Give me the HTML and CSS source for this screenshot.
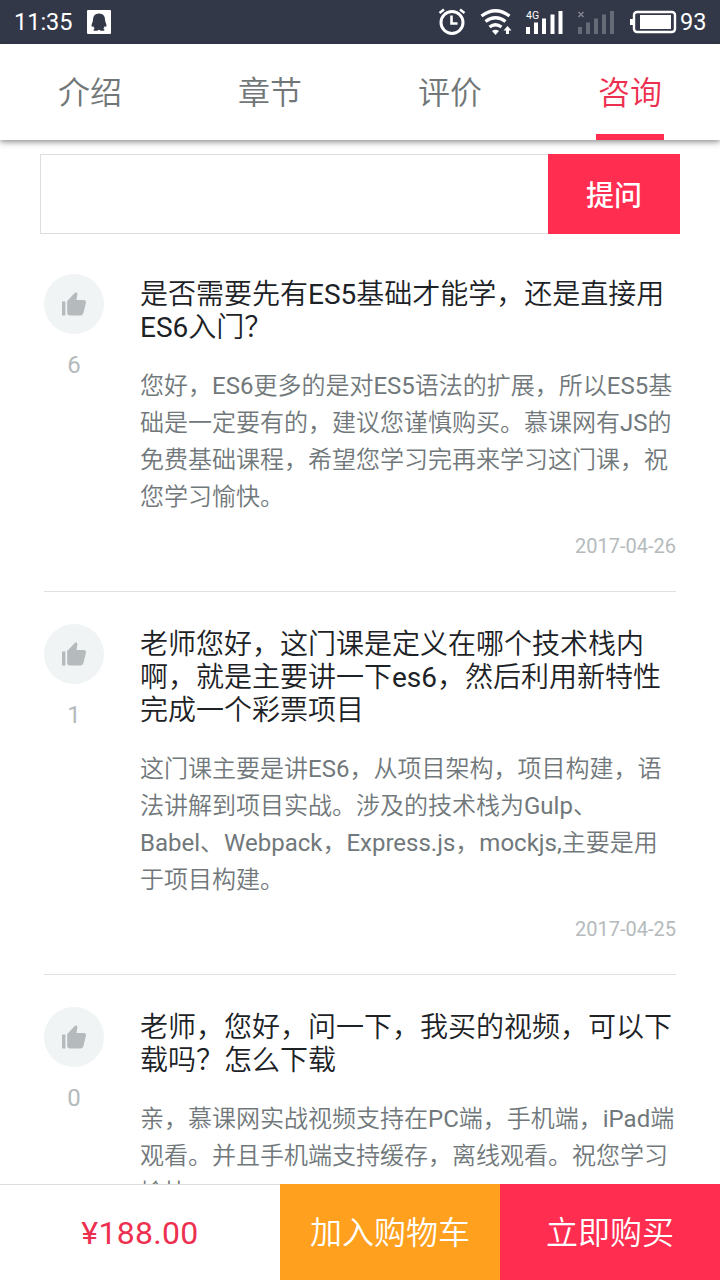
FILE: index.html
```html
<!DOCTYPE html>
<html lang="zh-CN">
<head>
<meta charset="utf-8">
<title>咨询</title>
<link rel="stylesheet" href="styles.css">
</head>
<body>
<svg class="defs" aria-hidden="true">
  <symbol id="thumb" viewBox="0 0 26 26">
    <path d="M1 10.500h3.400v14H1zM6.200 10L14 1.800q1.200-1 2 .2.500.8.300 2L15.500 9h7.500q2.300.3 2 2.500l-2.600 10.500q-.8 2.500-3 2.500H9q-2.600-.2-2.800-2z"/>
  </symbol>
</svg>
<div class="screen">
  <header class="status">
    <span class="clock">11:35</span>
    <svg class="qq" width="24" height="24" viewBox="0 0 24 24"><rect width="24" height="24" rx="1" fill="#fff"/><path fill="#333849" d="M12 3.500c-4 0-6 2.800-6 6.200 0 2-1.500 3.800-1.500 6 0 1.300.7 1.600 1.700.2.400 1.200.8 2 1.500 2.600-2.500 1.500-.8 2.500 1.500 2.300 1.300 0 2-.5 2.800-1 .8.500 1.500 1 2.800 1 2.300.2 4-.8 1.500-2.300.7-.6 1.100-1.400 1.500-2.600 1 1.400 1.700 1.100 1.700-.2 0-2.200-1.500-4-1.500-6 0-3.400-2-6.200-6-6.200z"/></svg>
    <svg class="indicators" width="260" height="44" viewBox="420 0 260 44" fill="none" stroke="#fff">
      <circle cx="452" cy="22.500" r="11" stroke-width="3"/>
      <path stroke-width="2.600" d="M451.500 15.500v8h6"/>
      <path stroke-width="2.400" d="M439.500 13l4.500-3.500M464.500 13l-4.500-3.500"/>
      <path stroke-width="3.200" d="M481.500 16q14-10.500 28 0M485.500 21.500q10-7.500 20 0M489.500 27q6-4.500 12 0"/>
      <path fill="#fff" stroke="none" d="M492 31q3.500-2.500 7 0l-3.500 4zM507.500 26l4 4.500h-2.500v3.500h-3v-3.500h-2.500z"/>
      <path stroke-width="4" d="M528 27v7M536 22.500v11.500M544 18.500v15.500M552.500 14.500v19.500M560.500 11v23"/>
      <text x="526" y="19" fill="#fff" stroke="none" font-size="10.500">4G</text>
      <path stroke="#676b78" stroke-width="4" d="M580 27v7M588 22.500v11.500M596 18.500v15.500M604 14.500v19.500M612 11v23"/>
      <path stroke="#80838e" stroke-width="1.600" d="M578.500 12l5 5M583.500 12l-5 5"/>
      <rect x="634" y="12" width="41" height="20" rx="3" stroke-width="2.400"/>
      <path fill="#fff" stroke="none" d="M640 15h31v14h-31zM630 19h4v6h-4z"/>
    </svg>
    <span class="percent">93</span>
  </header>
  <nav class="tabs">
    <a class="tab">介绍</a><a class="tab">章节</a><a class="tab">评价</a><a class="tab active">咨询</a>
  </nav>
  <main class="content">
    <form class="ask"><input class="ask-input" type="text" aria-label="提问"><button class="ask-button" type="button">提问</button></form>
    <article class="item">
      <div class="vote"><span class="vote-icon"><svg width="26" height="26"><use href="#thumb"/></svg></span><span class="count">6</span></div>
      <div class="entry">
        <h2 class="question">是否需要先有<span class="latin">ES5</span>基础才能学，还是直接用<br><span class="latin">ES6</span>入门？</h2>
        <p class="answer">您好，<span class="latin">ES6</span>更多的是对<span class="latin">ES5</span>语法的扩展，所以<span class="latin">ES5</span>基<br>础是一定要有的，建议您谨慎购买。慕课网有<span class="latin">JS</span>的<br>免费基础课程，希望您学习完再来学习这门课，祝<br>您学习愉快。</p>
        <time class="date">2017-04-26</time>
      </div>
    </article>
    <article class="item">
      <div class="vote"><span class="vote-icon"><svg width="26" height="26"><use href="#thumb"/></svg></span><span class="count">1</span></div>
      <div class="entry">
        <h2 class="question">老师您好，这门课是定义在哪个技术栈内<br>啊，就是主要讲一下<span class="latin">es6</span>，然后利用新特性<br>完成一个彩票项目</h2>
        <p class="answer">这门课主要是讲<span class="latin">ES6</span>，从项目架构，项目构建，语<br>法讲解到项目实战。涉及的技术栈为<span class="latin">Gulp</span>、<br><span class="latin">Babel</span>、<span class="latin">Webpack</span>，<span class="latin">Express.js</span>，<span class="latin">mockjs,</span>主要是用<br>于项目构建。</p>
        <time class="date">2017-04-25</time>
      </div>
    </article>
    <article class="item">
      <div class="vote"><span class="vote-icon"><svg width="26" height="26"><use href="#thumb"/></svg></span><span class="count">0</span></div>
      <div class="entry">
        <h2 class="question">老师，您好，问一下，我买的视频，可以下<br>载吗？怎么下载</h2>
        <p class="answer">亲，慕课网实战视频支持在<span class="latin">PC</span>端，手机端，<span class="latin">iPad</span>端<br>观看。并且手机端支持缓存，离线观看。祝您学习<br>愉快。</p>
      </div>
    </article>
  </main>
  <footer class="buybar">
    <span class="price">¥188.00</span>
    <a class="cart">加入购物车</a>
    <a class="buy">立即购买</a>
  </footer>
</div>
</body>
</html>
```
FILE: styles.css
```css
* { box-sizing: border-box; }
body {
  margin: 0;
  font-family: Roboto, "Noto Sans CJK SC", sans-serif;
  background: #fff;
}
.defs { display: none; }
.screen {
  display: flex;
  flex-direction: column;
  width: 720px;
  height: 1280px;
  overflow: hidden;
}
.status {
  display: flex;
  flex: none;
  align-items: center;
  height: 44px;
  padding: 0 13px 0 14px;
  background: #333849;
  color: #fff;
  font-size: 23.5px;
}
.clock { width: 73px; }
.indicators { margin-left: auto; }
.percent { width: 27px; }
.tabs {
  display: flex;
  flex: none;
  z-index: 1;
  height: 96px;
  background: #fff;
  box-shadow: 0 2px 6px rgba(0, 0, 0, .45);
}
.tab {
  flex: 1;
  display: flex;
  justify-content: center;
  color: #717777;
  font-size: 32px;
  font-weight: 350;
  line-height: 98px;
}
.tab.active {
  margin: 0 56px;
  flex: 0 0 68px;
  color: #ee3050;
  border-bottom: 6px solid #ff2d50;
}
.content {
  flex: 1;
  min-height: 0;
  overflow: hidden;
  padding: 14px 40px 0;
}
.ask { display: flex; height: 80px; margin-bottom: 8px; }
.ask-input {
  flex: 1;
  min-width: 0;
  border: 1px solid #dcdedf;
  border-right: 0;
  background: #fff;
}
.ask-button {
  width: 132px;
  padding: 0;
  border: 0;
  background: #ff2d50;
  color: #fff;
  font: 500 28px Roboto, "Noto Sans CJK SC", sans-serif;
}
.item {
  display: flex;
  gap: 36px;
  margin: 0 4px;
  padding: 32px 0 33px;
  border-bottom: 1px solid #dfe1e2;
}
.vote {
  display: flex;
  flex: none;
  flex-direction: column;
  align-items: center;
  gap: 15px;
  width: 60px;
}
.vote-icon {
  display: grid;
  place-items: center;
  width: 60px;
  height: 60px;
  border-radius: 50%;
  background: #f0f4f5;
  fill: #b5babc;
}
.count { color: #b5babc; font-size: 24px; line-height: 32px; }
.entry {
  display: flex;
  flex: 1;
  flex-direction: column;
  padding-top: 4px;
  white-space: nowrap;
}
.question {
  margin: 0 0 24px;
  color: #1c2226;
  font-size: 28px;
  font-weight: 350;
  line-height: 33px;
}
.answer {
  margin: 0 0 18px;
  color: #71787b;
  font-size: 24px;
  font-weight: 350;
  line-height: 37px;
}
.latin { font-weight: 400; }
.date {
  align-self: flex-end;
  color: #b5babc;
  font-size: 20px;
  line-height: 24px;
}
.buybar {
  display: flex;
  flex: none;
  height: 96px;
  background: #fff;
  font-size: 32px;
  line-height: 98px;
  text-align: center;
}
.price {
  width: 280px;
  border-top: 1px solid #dcdedf;
  color: #ee3050;
  line-height: 97px;
  letter-spacing: .3px;
}
.cart { width: 220px; background: #ffa01e; color: #fff; font-weight: 350; }
.buy { width: 220px; background: #ff2d50; color: #fff; font-weight: 350; }
```
